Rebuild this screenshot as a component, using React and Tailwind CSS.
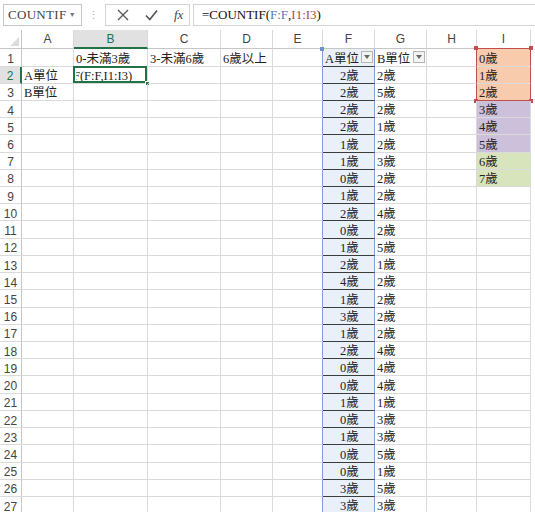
import React from "react";

const F = ["2", "2", "2", "2", "1", "1", "0", "1", "2", "0", "1", "2", "4", "1", "3", "1", "2", "0", "0", "1", "0", "1", "0", "0", "3", "3"];
const G = ["2", "5", "2", "1", "2", "3", "2", "2", "4", "2", "5", "1", "2", "2", "2", "2", "4", "4", "4", "1", "3", "3", "5", "1", "5", "3"];
const I = ["0", "1", "2", "3", "4", "5", "6", "7"];
const letters = ["A", "B", "C", "D", "E", "F", "G", "H", "I"];
const widths = ["w-[52px]", "w-[74px]", "w-[73px]", "w-[52px]", "w-[50px]", "w-[52px]", "w-[52px]", "w-[50px]", "w-[54px]"];

function FormulaBar() {
  return (
    <div className="h-[30px] flex items-center pl-[3px]">
      <div className="w-[79px] h-[22px] border border-[#c6c6c6] flex items-center justify-between pl-[4px] pr-[5px] text-[13px] text-[#444] tracking-[0.3px]">
        COUNTIF
        <span className="text-[7px] text-[#777]">▼</span>
      </div>
      <div className="w-[23px] flex justify-center text-[#aaa] text-[11px]">⋮</div>
      <div className="w-[85px] h-[22px] border border-[#d4d4d4] flex items-center">
        <svg className="ml-[11px]" width="12" height="12" viewBox="0 0 12 12">
          <path d="M1 1 L11 11 M11 1 L1 11" stroke="#555" strokeWidth="1.3" fill="none" />
        </svg>
        <svg className="ml-[16px]" width="13" height="12" viewBox="0 0 13 12">
          <path d="M1 6.5 L4.8 10.5 L12 1.5" stroke="#555" strokeWidth="1.6" fill="none" />
        </svg>
        <span className="ml-[16px] italic text-[13px] text-[#444] font-['Liberation_Serif',serif]">fx</span>
      </div>
      <div className="ml-[3px] flex-1 h-[22px] border-y border-l border-[#d4d4d4] flex items-center pl-[8px] text-[13px] text-[#111] whitespace-nowrap">
        =COUNTIF(<span className="text-[#5a78b4]">F:F</span>,<span className="text-[#a4504a]">I1:I3</span>)
      </div>
    </div>
  );
}

function HeaderRow() {
  return (
    <div className="flex h-[19.3px] font-['Liberation_Sans',sans-serif] text-[12px] text-[#444]">
      <div className="w-[22px] shrink-0 border-r border-b border-[#c6c6c6] relative">
        <svg className="absolute right-[2px] bottom-[2px]" width="9" height="9" viewBox="0 0 9 9">
          <path d="M9 0 L9 9 L0 9 Z" fill="#dcdcdc" />
        </svg>
      </div>
      {letters.map((l, i) => (
        <div
          key={l}
          className={`${widths[i]} shrink-0 flex items-center justify-center border-r border-[#d9d9d9] ${
            l === "B" ? "bg-[#e1e1e1] text-[#217346] border-b-2 border-b-[#217346]" : "border-b border-b-[#c6c6c6]"
          } ${l === "I" ? "border-b-[#c0504d] border-b-[1.5px]" : ""}`}
        >
          {l}
        </div>
      ))}
    </div>
  );
}

function Dropdown() {
  return (
    <span className="absolute right-[1px] top-[2px] w-[12px] h-[12px] border border-[#b5b5b5] bg-[#f3f3f3] flex items-center justify-center">
      <svg width="6" height="4" viewBox="0 0 6 4">
        <path d="M0 0 L6 0 L3 4 Z" fill="#666" />
      </svg>
    </span>
  );
}

const iFill = ["bg-[#f8cbad]", "bg-[#f8cbad]", "bg-[#f8cbad]", "bg-[#ccc0da]", "bg-[#ccc0da]", "bg-[#ccc0da]", "bg-[#d8e4bc]", "bg-[#d8e4bc]"];

function Row({ r }) {
  const base = "shrink-0 h-full flex items-center pt-[3px] pl-[2px] whitespace-nowrap border-b border-b-[#dadada] relative";
  const sel = r === 2;
  const red = r <= 3;
  return (
    <div className="flex h-[17.23px] text-[12.5px] text-[#222]">
      <div
        className={`w-[22px] shrink-0 flex items-center justify-center pt-[3px] font-['Liberation_Sans',sans-serif] text-[12px] border-b border-b-[#dadada] ${
          sel ? "bg-[#e1e1e1] text-[#217346] border-r-2 border-r-[#217346]" : "text-[#444] border-r border-r-[#c6c6c6]"
        }`}
      >
        {r}
      </div>
      {/* A */}
      <div className={`${widths[0]} ${base} border-r border-r-[#dadada]`}>
        {r === 2 ? "A單位" : r === 3 ? "B單位" : ""}
      </div>
      {/* B */}
      <div className={`${widths[1]} ${base} border-r border-r-[#dadada]`}>
        {r === 1 && "0-未滿3歲"}
        {sel && (
          <>
            <span className="overflow-hidden block w-full">
              <span className="block -ml-[3px]">F(F:F,I1:I3)</span>
            </span>
            <span className="absolute -left-[1px] -top-[1px] right-0 bottom-0 border-2 border-[#217346]" />
            <span className="absolute -right-[3px] -bottom-[3px] w-[5px] h-[5px] bg-[#217346] border border-white" />
          </>
        )}
      </div>
      {/* C */}
      <div className={`${widths[2]} ${base} border-r border-r-[#dadada]`}>{r === 1 && "3-未滿6歲"}</div>
      {/* D */}
      <div className={`${widths[3]} ${base} border-r border-r-[#dadada]`}>{r === 1 && "6歲以上"}</div>
      {/* E */}
      <div className={`${widths[4]} ${base} border-r-[1.5px] border-r-[#7f9fd6]`} />
      {/* F */}
      <div
        className={`${widths[5]} ${base} bg-[#eaf0fa] border-r-[1.5px] border-r-[#7f9fd6] !border-b-[#3c3c3c] ${
          r === 1 ? "justify-start" : "justify-center pl-0"
        }`}
      >
        {r === 1 ? (
          <>
            A單位
            <Dropdown />
            <span className="absolute -left-[3px] -top-[2px] w-[4px] h-[4px] bg-[#6f8fcf]" />
          </>
        ) : (
          `${F[r - 2]}歲`
        )}
      </div>
      {/* G */}
      <div className={`${widths[6]} ${base} border-r border-r-[#dadada]`}>
        {r === 1 ? (
          <>
            B單位
            <Dropdown />
          </>
        ) : (
          `${G[r - 2]}歲`
        )}
      </div>
      {/* H */}
      <div className={`${widths[7]} ${base} ${red ? "border-r-[1.5px] border-r-[#c0504d]" : "border-r border-r-[#dadada]"}`} />
      {/* I */}
      <div
        className={`${widths[8]} ${base} ${r <= 8 ? iFill[r - 1] : ""} ${
          red ? "border-r-[1.5px] border-r-[#c0504d]" : "border-r border-r-[#dadada]"
        } ${r === 3 ? "!border-b-[1.5px] !border-b-[#c0504d]" : ""}`}
      >
        {r <= 8 && `${I[r - 1]}歲`}
        {r === 1 && (
          <>
            <span className="absolute -left-[3px] -top-[3px] w-[4px] h-[4px] bg-[#c0504d]" />
            <span className="absolute -right-[3px] -top-[3px] w-[4px] h-[4px] bg-[#c0504d]" />
          </>
        )}
        {r === 3 && (
          <>
            <span className="absolute -left-[3px] -bottom-[3px] w-[4px] h-[4px] bg-[#c0504d]" />
            <span className="absolute -right-[3px] -bottom-[3px] w-[4px] h-[4px] bg-[#c0504d]" />
          </>
        )}
      </div>
    </div>
  );
}

export default function App() {
  const rows = Array.from({ length: 27 }, (_, i) => i + 1);
  return (
    <div className="w-[535px] h-[512px] overflow-hidden bg-white font-['Liberation_Serif','Noto_Sans_CJK_TC',serif]">
      <FormulaBar />
      <HeaderRow />
      {rows.map((r) => (
        <Row key={r} r={r} />
      ))}
    </div>
  );
}
